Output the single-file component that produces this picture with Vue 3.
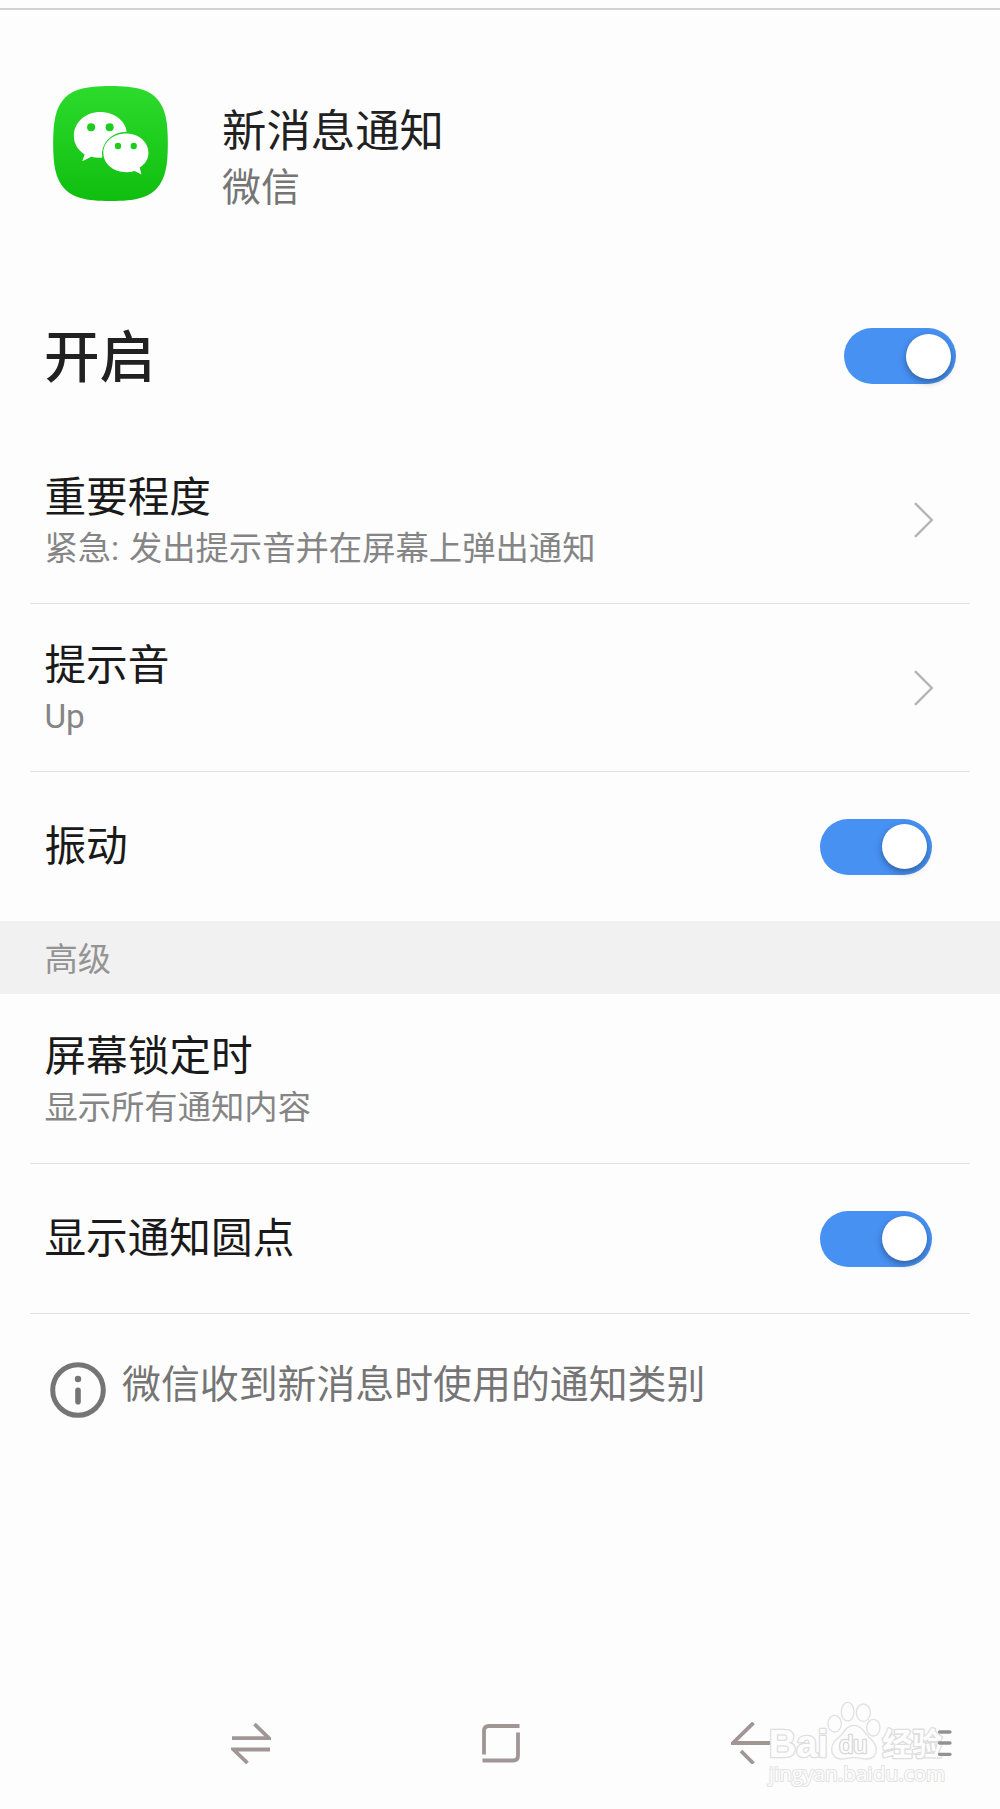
<template>
  <div class="page">
    <header class="app-header">
      <svg class="app-icon" viewBox="160 258 343 344">
        <defs>
          <linearGradient id="iconGreen" x1="0" y1="0" x2="0" y2="1">
            <stop offset="0" stop-color="#2cdb2c" />
            <stop offset="1" stop-color="#10be10" />
          </linearGradient>
        </defs>
        <path fill="url(#iconGreen)" d="M332 258C408 258 446 269 471 297C496 325 503 365 503 430C503 495 496 535 471 563C446 591 408 602 332 602C255 602 217 591 192 563C167 535 160 495 160 430C160 365 167 325 192 297C217 269 255 258 332 258Z" />
        <path fill="#fff" d="M301 336C257 336 222 367 222 407C222 431 234 450 254 463L247 483L274 470Q290 474 307 472A74 66 0 0 1 380 395C376 361 341 336 301 336Z" />
        <path fill="#fff" d="M378 400C340 400 310 425 310 458C310 491 340 516 378 516Q392 516 404 512L424 523L419 502C436 492 445 476 445 458C445 425 416 400 378 400Z" />
        <g fill="#1dcd1d">
          <circle cx="273.500" cy="381.500" r="12" />
          <circle cx="329" cy="381.500" r="12" />
          <circle cx="354" cy="437.500" r="9.500" />
          <circle cx="401" cy="437.500" r="9.500" />
        </g>
      </svg>
      <div class="app-text">
        <h1>{{ channel.name }}</h1>
        <p>{{ channel.app }}</p>
      </div>
    </header>

    <section class="master">
      <h2>开启</h2>
      <button class="switch" :class="{ on: enabled }" @click="enabled = !enabled"><span class="knob"></span></button>
    </section>

    <template v-for="group in groups" :key="group.id">
      <div v-if="group.title" class="group-title">{{ group.title }}</div>
      <ul :class="group.id">
        <li v-for="item in group.items" :key="item.label" class="row" :class="{ single: !item.summary }">
          <div class="row-text">
            <div class="label">{{ item.label }}</div>
            <div v-if="item.summary" class="summary">{{ item.summary }}</div>
          </div>
          <svg v-if="item.type === 'link'" class="chevron" viewBox="0 0 20 36">
            <path d="M1 1.200L17.800 18L1 34.800" />
          </svg>
          <button v-if="item.type === 'switch'" class="switch" :class="{ on: item.on }" @click="item.on = !item.on"><span class="knob"></span></button>
        </li>
      </ul>
    </template>

    <div class="info">
      <svg class="info-icon" viewBox="0 0 56 56">
        <circle cx="28" cy="28" r="25.300" fill="none" stroke="#757575" stroke-width="5" />
        <circle cx="28" cy="17" r="3.200" fill="#757575" />
        <rect x="25.200" y="25.500" width="5.600" height="17" rx="2.800" fill="#757575" />
      </svg>
      <p>微信收到新消息时使用的通知类别</p>
    </div>

    <nav class="nav-bar">
      <svg class="nav-icon" viewBox="0 0 40 42">
        <path d="M1 16.200H38L23.500 2M39 27.500H2.500L16.500 41" />
      </svg>
      <svg class="nav-icon" viewBox="0 0 40 42">
        <path d="M3 32.500V9Q3 4 8 4H38.500M37 10.500V33.500Q37 38.500 32 38.500H1.500" />
      </svg>
      <svg class="nav-icon" viewBox="0 0 40 42">
        <path d="M40 21H2L22.500 .800M10 29L22.500 41.500" />
      </svg>
      <svg class="nav-menu" viewBox="0 0 14 28">
        <path d="M1.500 3H12M1.500 14H12M1.500 25.300H12" />
      </svg>
      <svg class="watermark" viewBox="0 0 840 387">
        <g class="wm-shape">
          <ellipse cx="344" cy="131" rx="20" ry="25" />
          <ellipse cx="383" cy="95" rx="19" ry="28" />
          <ellipse cx="430" cy="98" rx="21" ry="26" />
          <ellipse cx="460" cy="143" rx="20" ry="25" />
          <path d="M402 136C382 136 374 153 362 167C346 181 335 190 335 208C335 226 347 237 366 237C380 237 386 233 402 233C418 233 428 238 442 237C460 236 469 224 469 207C469 191 456 181 443 167C430 153 422 136 402 136Z" />
        </g>
        <text class="wm-text wm-bold" x="146" y="232" font-size="118" textLength="178" lengthAdjust="spacingAndGlyphs">Bai</text>
        <text class="wm-text wm-du" x="358" y="220" font-size="74" textLength="84" lengthAdjust="spacingAndGlyphs">du</text>
        <text class="wm-text wm-cjk" x="487" y="226" font-size="92" textLength="180" lengthAdjust="spacingAndGlyphs">经验</text>
        <text class="wm-text wm-url" x="146" y="304" font-size="62" textLength="530" lengthAdjust="spacingAndGlyphs">jingyan.baidu.com</text>
      </svg>
    </nav>
  </div>
</template>

<script setup>
import { ref } from 'vue';

const channel = { name: '新消息通知', app: '微信' };

const enabled = ref(true);

const groups = ref([
  {
    id: 'basic',
    title: '',
    items: [
      { label: '重要程度', summary: '紧急: 发出提示音并在屏幕上弹出通知', type: 'link' },
      { label: '提示音', summary: 'Up', type: 'link' },
      { label: '振动', type: 'switch', on: true }
    ]
  },
  {
    id: 'advanced',
    title: '高级',
    items: [
      { label: '屏幕锁定时', summary: '显示所有通知内容', type: 'text' },
      { label: '显示通知圆点', type: 'switch', on: true }
    ]
  }
]);
</script>

<style>
body {
  background: #fdfdfd;
}
</style>

<style scoped>
.page {
  display: flex;
  flex-direction: column;
  box-sizing: border-box;
  height: 1809px;
  padding-top: 8px;
  overflow: hidden;
  background: #fdfdfd;
  color: #1a1a1a;
  font-family: Roboto, "Noto Sans CJK SC", sans-serif;
}

h1, h2, p, ul {
  margin: 0;
  padding: 0;
  font-weight: 400;
}

/* Header */
.app-header {
  display: flex;
  align-items: flex-start;
  box-sizing: border-box;
  height: 268px;
  padding: 76px 53px 0;
  border-top: 2px solid #d2d2d2;
}

.app-icon {
  width: 115px;
  height: 115px;
}

.app-text {
  margin: 16px 0 0 54px;
}

.app-text h1 {
  font-size: 44.4px;
  line-height: 60px;
  color: #212121;
}

.app-text p {
  margin-top: -1px;
  font-size: 38.9px;
  line-height: 54px;
  color: #757575;
}

.master {
  display: flex;
  align-items: center;
  justify-content: space-between;
  height: 160px;
  padding: 0 44px;
}

.master h2 {
  font-size: 55.6px;
  font-weight: 500;
  line-height: 80px;
  padding-top: 4px;
  color: #212121;
}

/* Switch */
.switch {
  display: flex;
  align-items: center;
  width: 112px;
  height: 56px;
  padding: 0 5.5px;
  border: none;
  border-radius: 28px;
  background: #bdbdbd;
  cursor: pointer;
}

.switch.on {
  justify-content: flex-end;
  background: #4791f3;
}

.knob {
  width: 45px;
  height: 45px;
  border-radius: 50%;
  background: #fff;
  box-shadow: 0 3px 7px rgba(0, 0, 0, 0.35);
}

/* Setting rows */
ul {
  list-style: none;
}

.row {
  display: flex;
  align-items: center;
  justify-content: space-between;
  box-sizing: border-box;
  height: 168px;
  margin: 0 30px;
  padding: 0 38px 0 14.4px;
  border-bottom: 1px solid #e0e0e0;
}

.row.single {
  height: 150px;
}

.row.single .row-text {
  padding-top: 1px;
}

.basic .row:last-child {
  height: 149px;
  border-bottom: none;
}

.advanced .row:first-child {
  height: 170px;
}

.row:not(.single) .row-text {
  padding-top: 5px;
}

.label {
  font-size: 41.67px;
  line-height: 54px;
}

.summary {
  font-size: 33.33px;
  line-height: 48px;
  word-spacing: 1.5px;
  color: #858585;
}

.chevron {
  width: 20px;
  height: 36px;
  margin-right: -2px;
}

.chevron path {
  fill: none;
  stroke: #b5b5b5;
  stroke-width: 2.4;
}

.group-title {
  height: 73px;
  padding-left: 44.4px;
  background: #f1f1f1;
  font-size: 33.33px;
  line-height: 77px;
  color: #949494;
}

.info {
  display: flex;
  align-items: flex-start;
  padding: 48px 50px 0;
}

.info-icon {
  width: 56px;
  height: 56px;
}

.info p {
  margin: -7px 0 0 16px;
  font-size: 38.9px;
  line-height: 60px;
  color: #757575;
}

/* Bottom navigation */
.nav-bar {
  position: relative;
  display: flex;
  align-items: center;
  gap: 210px;
  height: 129px;
  margin-top: auto;
  padding: 0 0 3px 231px;
  box-sizing: border-box;
}

.nav-icon {
  width: 40px;
  height: 42px;
}

.nav-icon path {
  fill: none;
  stroke: #a09795;
  stroke-width: 3.8;
}

.nav-menu {
  position: relative;
  z-index: 1;
  width: 14px;
  height: 28px;
  margin-left: -43px;
}

.nav-menu path {
  stroke: #929292;
  stroke-width: 3.3;
  stroke-linecap: round;
}

.watermark {
  position: absolute;
  left: 720px;
  top: 0;
  width: 280px;
  height: 129px;
}

.wm-shape {
  fill: #fdfdfd;
  stroke: #e0e0e0;
  stroke-width: 4;
}

.wm-text {
  fill: #fdfdfd;
  stroke: #dedede;
  stroke-width: 8;
  stroke-linejoin: round;
  paint-order: stroke;
}

.wm-bold {
  font-family: "Liberation Sans", sans-serif;
  font-weight: 700;
}

.wm-du {
  font-family: "Liberation Sans", sans-serif;
  stroke: #d8d8d8;
}

.wm-cjk {
  font-family: "Noto Sans CJK SC", sans-serif;
  font-weight: 700;
}

.wm-url {
  font-family: "Open Sans", sans-serif;
  stroke: #e2e2e2;
  stroke-width: 6;
}
</style>
